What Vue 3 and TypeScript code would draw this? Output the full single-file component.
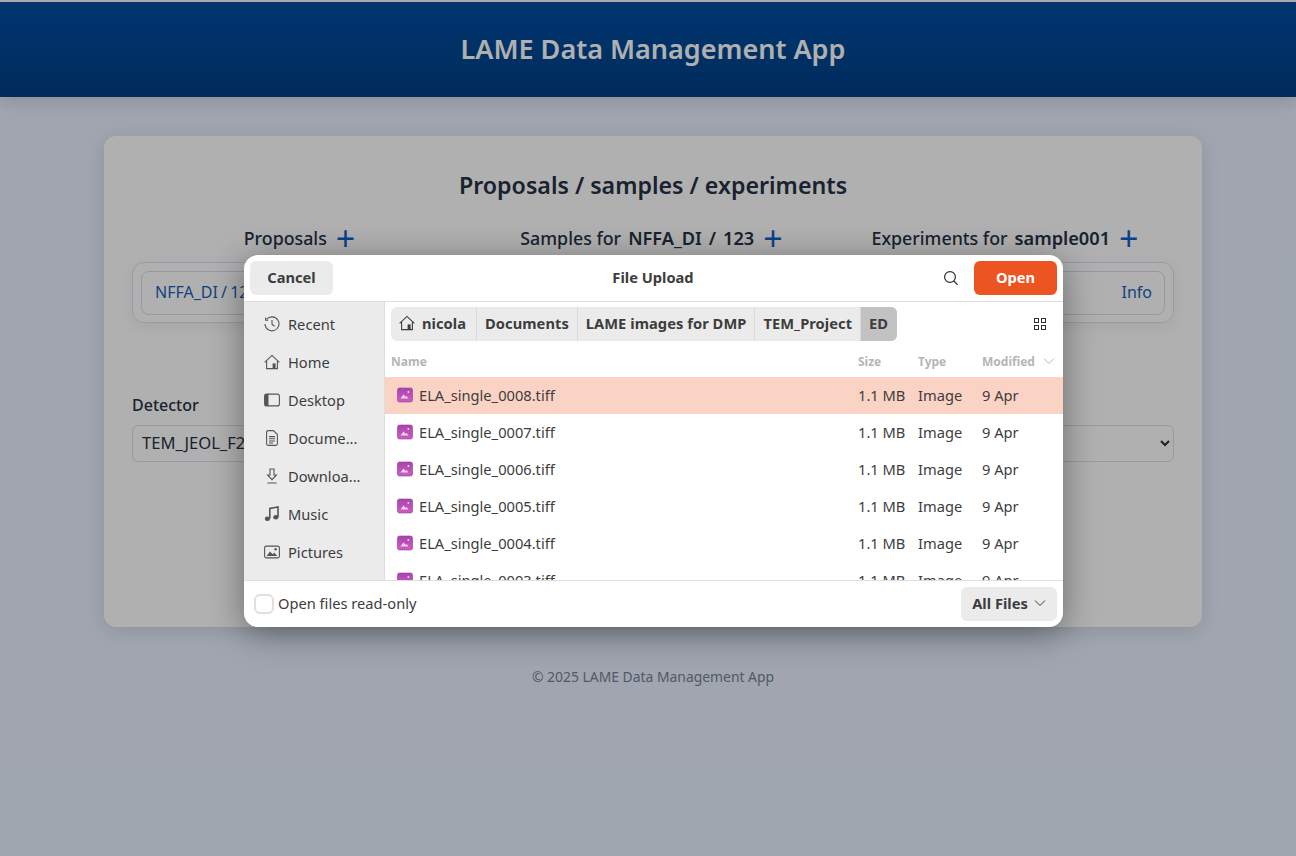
<script setup lang="ts">
const places = [
  { name: 'Recent', icon: 'recent' },
  { name: 'Home', icon: 'home' },
  { name: 'Desktop', icon: 'desktop' },
  { name: 'Docume...', icon: 'doc' },
  { name: 'Downloa...', icon: 'down' },
  { name: 'Music', icon: 'music' },
  { name: 'Pictures', icon: 'pics' },
]
const crumbs = ['Documents', 'LAME images for DMP', 'TEM_Project']
const files = ['0008', '0007', '0006', '0005', '0004', '0003'].map((n) => `ELA_single_${n}.tiff`)
</script>

<template>
  <div class="page">
    <header class="top">
      <h1>LAME Data Management App</h1>
    </header>

    <main class="card">
      <h2>Proposals / samples / experiments</h2>
      <div class="heads">
        <div class="head">Proposals <span class="plus">+</span></div>
        <div class="head">Samples for <b>NFFA_DI</b> <b>/</b> <b>123</b> <span class="plus">+</span></div>
        <div class="head">Experiments for <b>sample001</b> <span class="plus">+</span></div>
      </div>
      <div class="picked">
        <div class="picked-item">
          <span class="tight">NFFA_DI / 123</span>
          <span>Info</span>
        </div>
      </div>
      <label class="field-label">Detector</label>
      <select class="field">
        <option>TEM_JEOL_F200</option>
      </select>
    </main>

    <footer class="foot">© 2025 LAME Data Management App</footer>

    <div class="dim" />

    <section class="dialog">
      <div class="dlg-top">
        <button class="btn">Cancel</button>
        <div class="dlg-title">File Upload</div>
        <svg class="search" width="16" height="16" viewBox="0 0 16 16" fill="none" stroke="#2e2e2e" stroke-width="1.2">
          <circle cx="7" cy="7" r="5.4" />
          <path d="M11 11l3.6 3.8" />
        </svg>
        <button class="btn open">Open</button>
      </div>

      <div class="dlg-body">
        <aside class="side">
          <div v-for="p in places" :key="p.name" class="place">
            <svg width="16" height="16" viewBox="0 0 16 16" fill="none" stroke="#555" stroke-width="1.1">
              <template v-if="p.icon === 'recent'">
                <path d="M2.6 3.4A7 7 0 1 1 1 8" />
                <path d="M1.6 1.6v2.6h2.6" />
                <path d="M8 4v4.2l2.6 2" />
              </template>
              <template v-else-if="p.icon === 'home'">
                <path d="M0.6 8.4L8 1.4l7.4 7" />
                <path d="M2.6 7v7.6h10.8V7" />
                <rect x="8.6" y="9.4" width="3" height="5.2" fill="#555" stroke="none" />
              </template>
              <template v-else-if="p.icon === 'desktop'">
                <rect x="0.6" y="2.1" width="14.8" height="11.8" rx="2" />
                <path d="M1 3.5a1.5 1.5 0 0 1 1.5-1.5H4.5v12H2.5A1.5 1.5 0 0 1 1 12.5z" fill="#555" stroke="none" />
              </template>
              <template v-else-if="p.icon === 'doc'">
                <path d="M2.6 2.2a1.6 1.6 0 0 1 1.6-1.6h5.2l4 4v9.2a1.6 1.6 0 0 1-1.6 1.6H4.2a1.6 1.6 0 0 1-1.6-1.6z" />
                <path d="M5 6.6h6M5 8.8h6M5 11h6M5 13h4" />
              </template>
              <template v-else-if="p.icon === 'down'">
                <path d="M6 1h4v6h2.4L8 11.6 3.6 7H6z" />
                <path d="M3.4 15h9.2" />
              </template>
              <template v-else-if="p.icon === 'music'">
                <path d="M5.8 12.6V2.4L14 1v10" stroke-width="1.6" />
                <ellipse cx="3.4" cy="12.8" rx="2.6" ry="2.2" fill="#555" stroke="none" />
                <ellipse cx="11.8" cy="11.2" rx="2.6" ry="2.2" fill="#555" stroke="none" />
              </template>
              <template v-else>
                <rect x="0.6" y="2.1" width="14.8" height="11.8" rx="1.6" />
                <path d="M2.6 12l3.4-4.6 2.6 2.8 1.6-1.4 3.2 3.2z" fill="#555" stroke="none" />
                <circle cx="11.6" cy="5.2" r="1.2" fill="#555" stroke="none" />
              </template>
            </svg>
            <span>{{ p.name }}</span>
          </div>
        </aside>

        <div class="browser">
          <div class="bar">
            <div class="path">
              <div class="crumb home-crumb">
                <svg width="16" height="16" viewBox="0 0 16 16" fill="none" stroke="#3d3d3d" stroke-width="1.1">
                  <path d="M0.6 8.4L8 1.4l7.4 7" />
                  <path d="M2.6 7v7.6h10.8V7" />
                  <rect x="8.6" y="9.4" width="3" height="5.2" fill="#3d3d3d" stroke="none" />
                </svg>
                nicola
              </div>
              <div v-for="c in crumbs" :key="c" class="crumb">{{ c }}</div>
              <div class="crumb last">ED</div>
            </div>
            <svg class="grid-ico" width="14" height="14" viewBox="0 0 14 14" fill="none" stroke="#2e2e2e" stroke-width="1">
              <rect x="1.5" y="1.5" width="4" height="4" />
              <rect x="8.5" y="1.5" width="4" height="4" />
              <rect x="1.5" y="8.5" width="4" height="4" />
              <rect x="8.5" y="8.5" width="4" height="4" />
            </svg>
          </div>

          <div class="cols">
            <span class="c-name">Name</span>
            <span class="c-size">Size</span>
            <span class="c-type">Type</span>
            <span class="c-mod">Modified</span>
            <svg width="12" height="8" viewBox="0 0 12 8" fill="none" stroke="#b5b5b5" stroke-width="1">
              <path d="M1 1.5l5 5 5-5" />
            </svg>
          </div>

          <div class="list">
            <div v-for="(f, i) in files" :key="f" class="row" :class="{ sel: i === 0 }">
              <svg class="file-ico" width="16" height="16" viewBox="0 0 16 16">
                <defs>
                  <linearGradient :id="`grad${i}`" x1="0" y1="0" x2="0" y2="1">
                    <stop offset="0" stop-color="#a844ae" />
                    <stop offset="1" stop-color="#cf5cc0" />
                  </linearGradient>
                </defs>
                <rect x="0.5" y="1" width="15" height="14" rx="2" :fill="`url(#grad${i})`" stroke="#8f3a98" stroke-width="0.6" />
                <path d="M3.4 11.6l3.2-4 2 2.4 1-.9 1.8 2.5z" fill="#f0d6ee" />
                <circle cx="11.4" cy="5" r="1" fill="#f0d6ee" />
              </svg>
              <span class="c-name">{{ f }}</span>
              <span class="c-size">1.1 MB</span>
              <span class="c-type">Image</span>
              <span class="c-mod">9 Apr</span>
            </div>
          </div>
        </div>
      </div>

      <div class="dlg-foot">
        <span class="check" />
        <span class="check-label">Open files read-only</span>
        <button class="btn filter">
          All Files
          <svg width="12" height="8" viewBox="0 0 12 8" fill="none" stroke="#3d3d3d" stroke-width="1">
            <path d="M1 1.5l5 5 5-5" />
          </svg>
        </button>
      </div>
    </section>
  </div>
</template>

<style>
html,
body {
  overflow: hidden;
}
</style>

<style scoped>
.page {
  position: relative;
  height: 856px;
  overflow: hidden;
  background: #e8f0ff;
  color: #263245;
  font-family: 'Noto Sans', 'Open Sans', sans-serif;
}

.top {
  position: relative;
  box-sizing: border-box;
  height: 97px;
  padding: 0 0 2px 10px;
  border-top: 2px solid #f8f8f8;
  display: flex;
  align-items: center;
  justify-content: center;
  background: linear-gradient(180deg, #004ea3, #003f85 100%);
  box-shadow: 0 4px 16px rgba(0, 0, 0, 0.14);
}

.top h1 {
  margin: 0;
  font-size: 27px;
  font-weight: 600;
  color: #fff;
}

.card {
  box-sizing: border-box;
  width: 1098px;
  height: 491px;
  margin: 39px 0 0 104px;
  padding: 34px 28px 0;
  background: #fff;
  border-radius: 12px;
  box-shadow: 0 4px 20px rgba(0, 0, 0, 0.12);
}

.card h2 {
  margin: 0;
  font-size: 23.2px;
  font-weight: 600;
  line-height: 30px;
  text-align: center;
}

.heads {
  display: grid;
  grid-template-columns: 335px 369px 338px;
  margin-top: 23px;
}

.head {
  display: flex;
  align-items: center;
  justify-content: center;
  gap: 7px;
  height: 30px;
  font-size: 17.8px;
  font-weight: 500;
}

.head b {
  font-weight: 600;
  font-size: 18.2px;
}

.plus {
  margin-left: 2px;
  font-size: 34px;
  font-weight: 400;
  line-height: 30px;
  color: #0f5fc8;
}

.picked {
  box-sizing: border-box;
  height: 61px;
  margin-top: 9px;
  padding: 8px 8px 7px;
  border: 1px solid #d8e2f1;
  border-radius: 12px;
  box-shadow: 0 4px 14px rgba(0, 0, 0, 0.06);
}

.picked-item {
  box-sizing: border-box;
  height: 100%;
  padding: 0 12px 2px 13px;
  display: flex;
  align-items: center;
  justify-content: space-between;
  border: 1px solid #d3deef;
  border-radius: 8px;
  font-size: 16px;
  color: #1b5fb8;
}

.tight {
  word-spacing: -1px;
}

.field-label {
  display: block;
  margin-top: 71px;
  font-size: 16px;
  font-weight: 500;
  line-height: 22px;
}

.field {
  display: block;
  box-sizing: border-box;
  width: 100%;
  height: 37px;
  margin-top: 9px;
  padding: 0 5px 2px;
  background: transparent;
  border: 1px solid #d8e2f1;
  border-radius: 6px;
  font: inherit;
  font-size: 16.6px;
  color: #263245;
}

.foot {
  margin-top: 40px;
  padding-left: 10px;
  font-size: 13.9px;
  text-align: center;
  color: #768294;
}

.dim {
  position: absolute;
  inset: 0;
  background: rgba(0, 0, 0, 0.31);
}

.dialog {
  position: absolute;
  left: 244px;
  top: 255px;
  width: 819px;
  height: 372px;
  display: flex;
  flex-direction: column;
  overflow: hidden;
  background: #fff;
  border-radius: 14px;
  box-shadow: 0 6px 34px rgba(0, 0, 0, 0.4);
  font-family: 'Noto Sans', sans-serif;
  font-size: 14.67px;
  color: #3d3d3d;
}

.btn {
  height: 34px;
  padding: 0 0 2px;
  border: 0;
  border-radius: 6px;
  background: #ebebeb;
  font: inherit;
  font-weight: 700;
  color: #3d3d3d;
}

.dlg-top {
  flex: none;
  box-sizing: border-box;
  height: 47px;
  padding: 6px;
  display: flex;
  align-items: flex-start;
  border-bottom: 1px solid #dedede;
}

.dlg-top .btn {
  width: 83px;
}

.dlg-top .open {
  background: #ec5422;
  color: #fff;
}

.dlg-title {
  flex: 1;
  line-height: 32px;
  font-weight: 700;
  text-align: center;
  padding-left: 30px;
}

.search {
  margin: 9px 15px 0 0;
}

.dlg-body {
  flex: 1;
  min-height: 0;
  display: flex;
}

.side {
  flex: none;
  box-sizing: border-box;
  width: 141px;
  padding: 3px 0 0 20px;
  background: #ebebeb;
  border-right: 1px solid #dedede;
}

.place {
  height: 38px;
  display: flex;
  align-items: center;
  gap: 8px;
}

.browser {
  flex: 1;
  min-width: 0;
  display: flex;
  flex-direction: column;
}

.bar {
  flex: none;
  height: 34px;
  padding: 5px 16px 0 6px;
  display: flex;
  align-items: center;
  justify-content: space-between;
}

.path {
  display: flex;
  height: 34px;
  border-radius: 6px;
  overflow: hidden;
  background: #ebebeb;
  font-weight: 700;
  letter-spacing: 0.05px;
}

.crumb {
  padding: 0 8px 2px;
  display: flex;
  align-items: center;
  border-left: 1px solid #dadada;
}

.crumb.home-crumb {
  gap: 7px;
  padding-right: 10px;
  border-left: 0;
}

.crumb.last {
  padding-right: 9px;
  background: #c2c2c2;
}

.cols,
.row {
  display: flex;
  align-items: center;
}

.cols {
  flex: none;
  box-sizing: border-box;
  height: 36px;
  padding-top: 4px;
  font-size: 12px;
  font-weight: 700;
  color: #b5b5b5;
}

.c-name {
  width: 473px;
  padding-left: 6px;
  box-sizing: border-box;
}

.c-size {
  width: 60px;
}

.c-type {
  width: 64px;
}

.c-mod {
  width: 61px;
}

.list {
  flex: 1;
  min-height: 0;
  overflow: hidden;
}

.row {
  box-sizing: border-box;
  height: 37px;
  padding-bottom: 2px;
  position: relative;
}

.row .c-name {
  padding-left: 34px;
}

.row.sel {
  background: #fbd3c5;
}

.file-ico {
  position: absolute;
  left: 12px;
  top: 10px;
}

.dlg-foot {
  flex: none;
  box-sizing: border-box;
  height: 47px;
  padding: 6px 6px 6px 10px;
  display: flex;
  align-items: center;
  border-top: 1px solid #dedede;
}

.check {
  box-sizing: border-box;
  width: 20px;
  height: 20px;
  border: 2px solid #e0e0e0;
  border-radius: 6px;
}

.check-label {
  flex: 1;
  margin-left: 4px;
  padding-bottom: 2px;
}

.filter {
  width: 96px;
  display: flex;
  align-items: center;
  justify-content: center;
  gap: 6px;
}
</style>
